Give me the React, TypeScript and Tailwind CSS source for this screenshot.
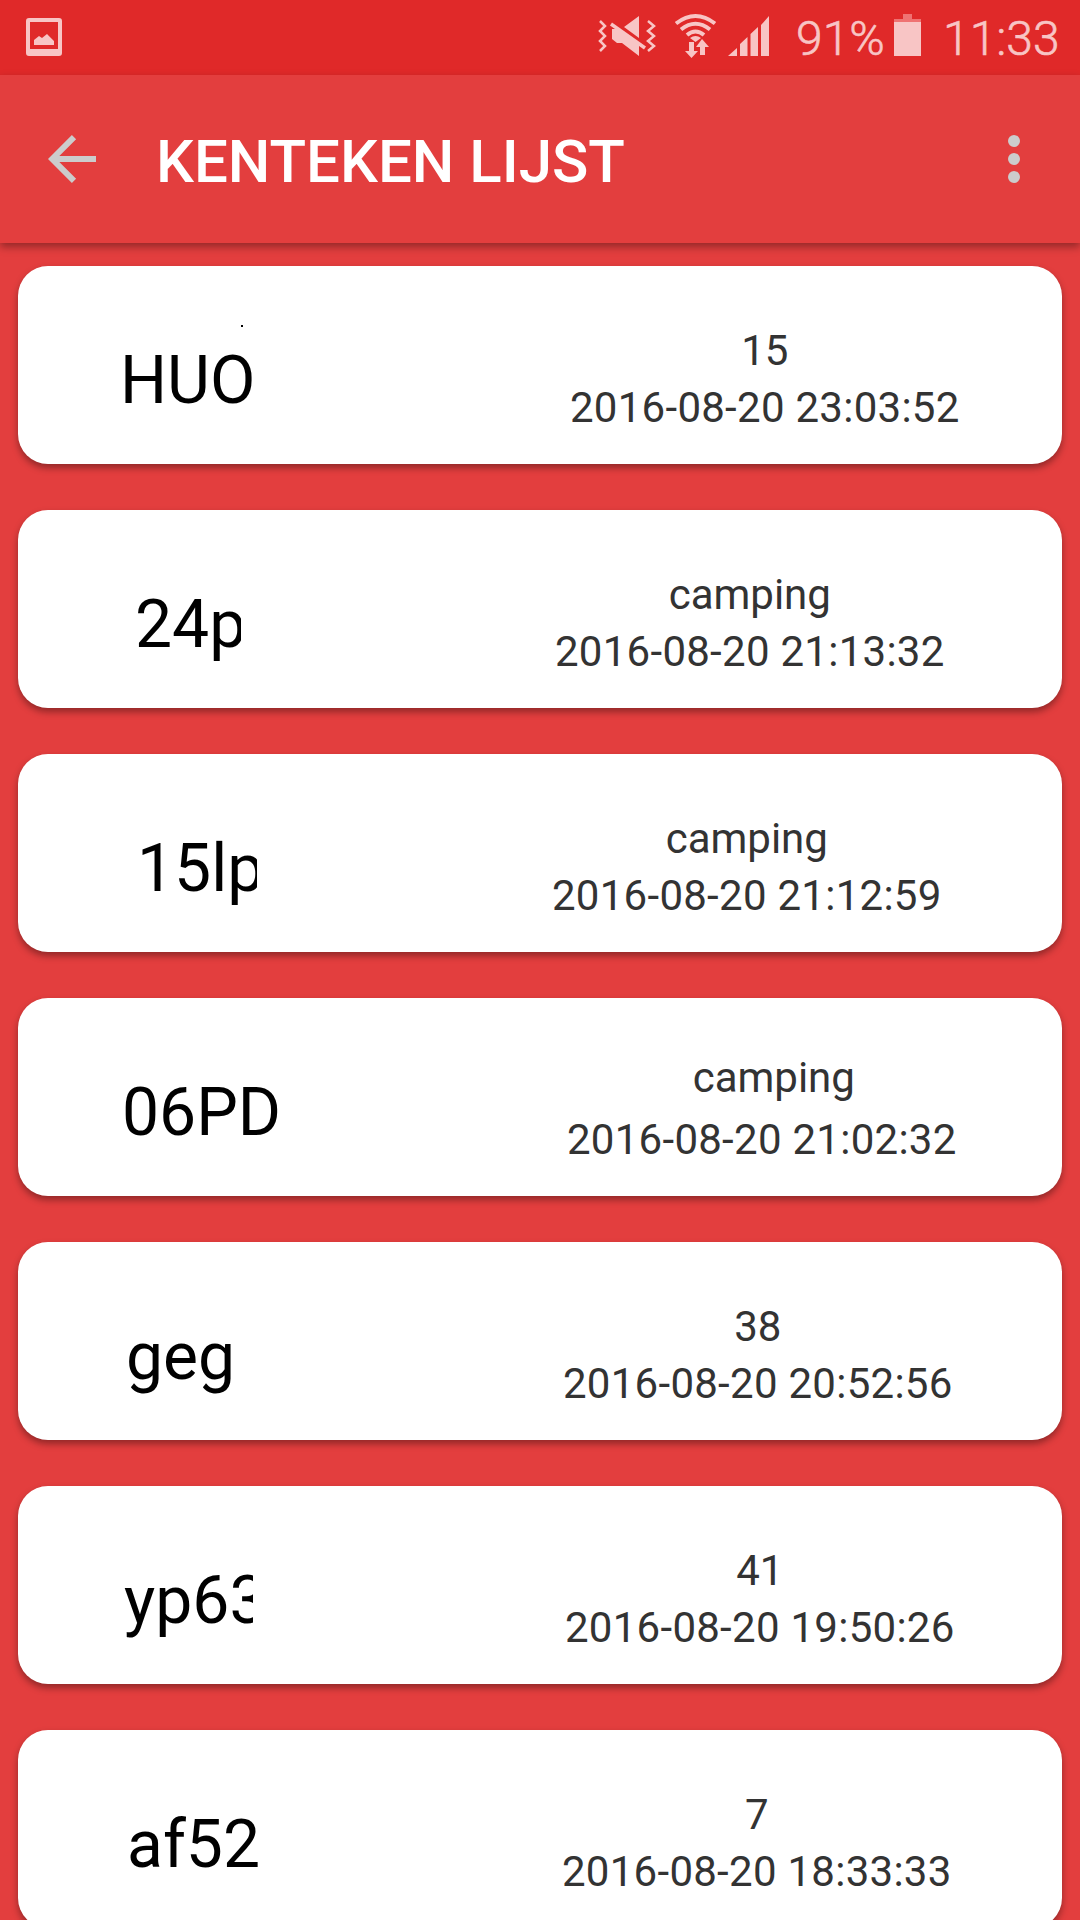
const rows = [
  { plate: 'HUO', px: 'pl-[102px]', pw: 'w-[140px]', info: '15', date: '2016-08-20 23:03:52', ix: 'pl-[552px]', gap: 'pt-[60px]', lh: 'h-[57px]', dot: true },
  { plate: '24p', px: 'pl-[117px]', pw: 'w-[106px]', info: 'camping', date: '2016-08-20 21:13:32', ix: 'pl-[537px]', gap: 'pt-[60px]', lh: 'h-[57px]' },
  { plate: '15lp', px: 'pl-[119px]', pw: 'w-[120px]', info: 'camping', date: '2016-08-20 21:12:59', ix: 'pl-[534px]', gap: 'pt-[60px]', lh: 'h-[57px]' },
  { plate: '06PD', px: 'pl-[104px]', pw: 'w-[180px]', info: 'camping', date: '2016-08-20 21:02:32', ix: 'pl-[549px]', gap: 'pt-[55px]', lh: 'h-[62px] pl-[24px]' },
  { plate: 'geg', px: 'pl-[108px]', pw: 'w-[180px]', info: '38', date: '2016-08-20 20:52:56', ix: 'pl-[545px]', gap: 'pt-[60px]', lh: 'h-[57px]' },
  { plate: 'yp63', px: 'pl-[106px]', pw: 'w-[129px]', info: '41', date: '2016-08-20 19:50:26', ix: 'pl-[547px]', gap: 'pt-[60px]', lh: 'h-[57px]' },
  { plate: 'af52', px: 'pl-[109px]', pw: 'w-[180px]', info: '7', date: '2016-08-20 18:33:33', ix: 'pl-[544px]', gap: 'pt-[60px]', lh: 'h-[57px]' },
];

function StatusBar() {
  return (
    <div className="flex h-[75px] shrink-0 items-center bg-[#e02929] text-[#f8c5c5]">
      <svg className="ml-[26px] h-[38px] w-[36px] -translate-y-px" viewBox="0 0 36 38">
        <path fill="currentColor" fillRule="evenodd" d="M3 0H33Q36 0 36 3V35Q36 38 33 38H3Q0 38 0 35V3Q0 0 3 0ZM4 4V31H32V4ZM8 27V22L13 18L16 20L21 16L28 23V27Z" />
      </svg>
      <svg className="ml-[534px] h-[75px] w-[180px]" viewBox="596 0 180 75" fill="none" stroke="currentColor">
        <path strokeWidth="2.5" d="M600 21L605 26L600 31L605 36L600 41L605 46L600 51M648 21L654 26L648 31L654 36L648 41L654 46L648 51" />
        <path fill="currentColor" stroke="none" d="M612 29H617L639 44V56L622 43H617L612 39ZM624 27L639 16V38Z" />
        <path strokeWidth="3.5" d="M611 24L645 48" />
        <path strokeWidth="4" d="M676 23.500Q695.500 8.500 715 23.500M681 29.500Q695.500 18 710 29.500M687 35Q695.500 28 704 35" />
        <path fill="currentColor" stroke="none" d="M690 38Q695.500 34 701 38L695.500 42ZM689 42H694V51H698L691.500 58L685 51H689ZM702 39L709 47H705V55H700V47H696Z" />
        <path fill="currentColor" stroke="none" d="M728 56L737 48V56ZM740 44L747.500 37V56H740ZM750.500 34L758 27V56H750.500ZM761 25L769 16V56H761Z" />
      </svg>
      <span className="ml-[20px] w-[88px] pt-px text-[48px] leading-[75px] font-light whitespace-nowrap [-webkit-text-stroke:0.6px_#f8c5c5]">91%</span>
      <svg className="ml-[10px] h-[75px] w-[27px]" viewBox="0 0 27 75">
        <path fill="#ef7272" d="M9 14H18V19H27V23H0V19H9Z" />
        <path fill="currentColor" d="M0 22H27V56H0Z" />
      </svg>
      <span className="ml-[22px] pt-px text-[48px] leading-[75px] font-light whitespace-nowrap [-webkit-text-stroke:0.6px_#f8c5c5]">11:33</span>
    </div>
  );
}

function AppBar() {
  return (
    <header className="z-10 flex h-[168px] shrink-0 items-center bg-[#e33e3e] shadow-[0_4px_8px_rgba(0,0,0,0.35)]">
      <svg className="ml-[48px] h-[48px] w-[48px]" viewBox="0 0 48 48" fill="none" stroke="#cccccc" strokeWidth="6">
        <path d="M48 24H5M26 2.200L4.200 24L26 45.800" />
      </svg>
      <h1 className="ml-[60px] pt-[5px] text-[60px] leading-[70px] font-medium whitespace-nowrap text-white">KENTEKEN LIJST</h1>
      <svg className="mr-[60px] ml-auto h-[48px] w-[12px]" viewBox="0 0 12 48" fill="#cccccc">
        <circle cx="6" cy="6" r="6" />
        <circle cx="6" cy="24" r="6" />
        <circle cx="6" cy="42" r="6" />
      </svg>
    </header>
  );
}

export default function App() {
  return (
    <div className="flex h-[1920px] w-[1080px] flex-col overflow-hidden bg-[#e33e3e] font-['Roboto',sans-serif]">
      <StatusBar />
      <AppBar />
      <main className="flex flex-col gap-[46px] px-[18px] pt-[23px]">
        {rows.map((r) => (
          <article key={r.date} className="relative grid h-[198px] shrink-0 grid-cols-1 rounded-[30px] bg-white shadow-[0_4px_7px_rgba(0,0,0,0.36)]">
            <div className={`col-start-1 row-start-1 pt-[77px] ${r.px}`}>
              <div className={`overflow-hidden text-[66px] leading-[76px] whitespace-nowrap text-black ${r.pw}`}>{r.plate}</div>
            </div>
            <div className={`col-start-1 row-start-1 flex ${r.ix} ${r.gap}`}>
              <div className="flex flex-col items-center text-[42px] leading-[50px] whitespace-nowrap text-[#333333]">
                <span className={r.lh}>{r.info}</span>
                <span className="tracking-[0.27px]">{r.date}</span>
              </div>
            </div>
            {r.dot && <i className="absolute top-[59px] left-[223px] size-[2px] bg-black" />}
          </article>
        ))}
      </main>
    </div>
  );
}
